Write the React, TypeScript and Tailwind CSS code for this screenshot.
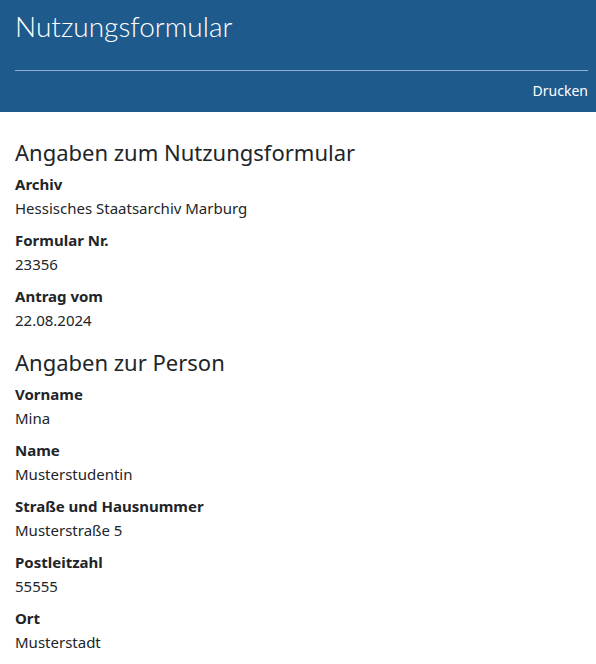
import React from "react";

const font = { fontFamily: '"Noto Sans", "Open Sans", sans-serif' };
const titleFont = { fontFamily: 'Lato, "Noto Sans", sans-serif' };

function Field({ label, value }: { label: string; value: string }) {
  return (
    <div className="mb-2">
      <div className="text-[15px] leading-6 font-bold">{label}</div>
      <div className="text-[15px] leading-6">{value}</div>
    </div>
  );
}

export default function App() {
  return (
    <div className="min-h-[664px] bg-white text-[#212529]" style={font}>
      <header className="bg-[#1f5a8d] text-white h-[112px] pl-[15px] pr-2">
        <div className="h-[71px] border-b border-[#8eb0d2] pt-[6px]">
          <h1 className="text-[28px] font-light leading-[40px]" style={titleFont}>
            Nutzungsformular
          </h1>
        </div>
        <div className="flex justify-end pt-[8px]">
          <span className="text-[14px] leading-6">Drucken</span>
        </div>
      </header>
      <main className="px-[15px] pt-[24px]">
        <h2 className="text-[22px] leading-8 mb-[4px]">Angaben zum Nutzungsformular</h2>
        <Field label="Archiv" value="Hessisches Staatsarchiv Marburg" />
        <Field label="Formular Nr." value="23356" />
        <Field label="Antrag vom" value="22.08.2024" />
        <h2 className="text-[22px] leading-8 mt-[14px] mb-[4px]">Angaben zur Person</h2>
        <Field label="Vorname" value="Mina" />
        <Field label="Name" value="Musterstudentin" />
        <Field label="Straße und Hausnummer" value="Musterstraße 5" />
        <Field label="Postleitzahl" value="55555" />
        <Field label="Ort" value="Musterstadt" />
      </main>
    </div>
  );
}
